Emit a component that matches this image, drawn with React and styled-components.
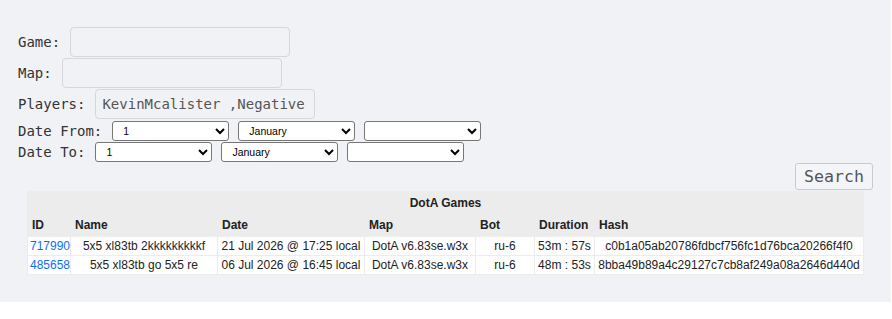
import React from 'react'
import styled, { createGlobalStyle } from 'styled-components'

const GlobalStyle = createGlobalStyle`
  body {
    margin: 0;
    background: #fff;
  }
`

const Panel = styled.div`
  width: 891px;
  box-sizing: border-box;
  background: #f1f2f6;
  padding: 27px 0 27px 0;
`

const Form = styled.form`
  display: flex;
  flex-direction: column;
  padding: 0 18px;
`

const FieldRow = styled.div`
  display: flex;
  align-items: center;
  height: ${p => p.$h}px;
  margin-bottom: ${p => p.$mb || 0}px;
`

const Label = styled.label`
  font-family: "DejaVu Sans Mono", monospace;
  font-size: 14px;
  color: #333;
  margin-right: 10px;
  white-space: pre;
`

const TextInput = styled.input`
  width: 220px;
  height: 30px;
  box-sizing: border-box;
  border: 1px solid #d6d7da;
  border-radius: 4px;
  background: transparent;
  padding: 0 6px;
  font-family: "DejaVu Sans Mono", monospace;
  font-size: 14px;
  color: #555;
  outline: none;
`

const Selects = styled.div`
  display: flex;
  gap: 9px;
`

const Select = styled.select`
  width: 117px;
  height: 20px;
  box-sizing: border-box;
  border: 1px solid #767676;
  border-radius: 3px;
  background: #fff;
  color: #000;
  padding: 0 0 0 6px;
  font-family: "Liberation Sans", Arial, sans-serif;
  font-size: 10.5px;
`

const SearchButton = styled.button`
  align-self: flex-end;
  height: 27px;
  margin-top: 1px;
  padding: 0 8px;
  box-sizing: border-box;
  border: 1px solid #c9cacd;
  border-radius: 3px;
  background: #f4f5f8;
  color: #555;
  font-family: "DejaVu Sans Mono", monospace;
  font-size: 16.6px;
  cursor: pointer;
`

const Table = styled.table`
  width: 836px;
  margin: 1px auto 0;
  border-collapse: collapse;
  table-layout: fixed;
  font-family: "Liberation Sans", Arial, sans-serif;
  font-size: 12px;
  color: #222;
`

const Title = styled.th`
  height: 21px;
  padding: 0;
  background: #ececec;
  border: 1px solid #ececec;
  text-align: center;
  font-weight: bold;
`

const HeadCell = styled.th`
  height: 22px;
  padding: 0 4px;
  background: #ececec;
  border: 1px solid #ececec;
  text-align: left;
  font-weight: bold;
`

const Cell = styled.td`
  height: 18px;
  padding: 0 2px;
  background: #fff;
  border: 1px solid #ececec;
  text-align: center;
  white-space: nowrap;
  overflow: hidden;
`

const GameLink = styled.a`
  color: #0d6efd;
  text-decoration: none;
`

const columns = [
  { name: 'ID', width: 43 },
  { name: 'Name', width: 147 },
  { name: 'Date', width: 147 },
  { name: 'Map', width: 111 },
  { name: 'Bot', width: 59 },
  { name: 'Duration', width: 60 },
  { name: 'Hash', width: 269 }
]

const games = [
  {
    id: '717990',
    name: '5x5 xl83tb 2kkkkkkkkkf',
    date: '21 Jul 2026 @ 17:25 local',
    map: 'DotA v6.83se.w3x',
    bot: 'ru-6',
    duration: '53m : 57s',
    hash: 'c0b1a05ab20786fdbcf756fc1d76bca20266f4f0'
  },
  {
    id: '485658',
    name: '5x5 xl83tb go 5x5 re',
    date: '06 Jul 2026 @ 16:45 local',
    map: 'DotA v6.83se.w3x',
    bot: 'ru-6',
    duration: '48m : 53s',
    hash: '8bba49b89a4c29127c7cb8af249a08a2646d440d'
  }
]

const months = ['January', 'February', 'March', 'April', 'May', 'June', 'July',
  'August', 'September', 'October', 'November', 'December']

const DateRow = ({ label }) => (
  <FieldRow $h={21}>
    <Label>{label}</Label>
    <Selects>
      <Select defaultValue='1'>
        {Array.from({ length: 31 }, (_, i) => <option key={i}>{i + 1}</option>)}
      </Select>
      <Select defaultValue='January'>
        {months.map(m => <option key={m}>{m}</option>)}
      </Select>
      <Select defaultValue=''>
        <option value='' />
        <option>2026</option>
        <option>2025</option>
      </Select>
    </Selects>
  </FieldRow>
)

const App = () => {
  return (
    <Panel>
      <GlobalStyle />
      <Form onSubmit={e => e.preventDefault()}>
        <FieldRow $h={30} $mb={1}>
          <Label>Game:</Label>
          <TextInput />
        </FieldRow>
        <FieldRow $h={30} $mb={1}>
          <Label>Map:</Label>
          <TextInput />
        </FieldRow>
        <FieldRow $h={30} $mb={1}>
          <Label>Players:</Label>
          <TextInput defaultValue='KevinMcalister ,Negative' />
        </FieldRow>
        <DateRow label='Date From:' />
        <DateRow label='Date To:' />
        <SearchButton type='submit'>Search</SearchButton>
      </Form>
      <Table>
        <colgroup>
          {columns.map(c => <col key={c.name} style={{ width: c.width }} />)}
        </colgroup>
        <thead>
          <tr>
            <Title colSpan={7}>DotA Games</Title>
          </tr>
          <tr>
            {columns.map(c => <HeadCell key={c.name}>{c.name}</HeadCell>)}
          </tr>
        </thead>
        <tbody>
          {games.map(g => (
            <tr key={g.id}>
              <Cell><GameLink href='#'>{g.id}</GameLink></Cell>
              <Cell>{g.name}</Cell>
              <Cell>{g.date}</Cell>
              <Cell>{g.map}</Cell>
              <Cell>{g.bot}</Cell>
              <Cell>{g.duration}</Cell>
              <Cell>{g.hash}</Cell>
            </tr>
          ))}
        </tbody>
      </Table>
    </Panel>
  )
}

export default App
